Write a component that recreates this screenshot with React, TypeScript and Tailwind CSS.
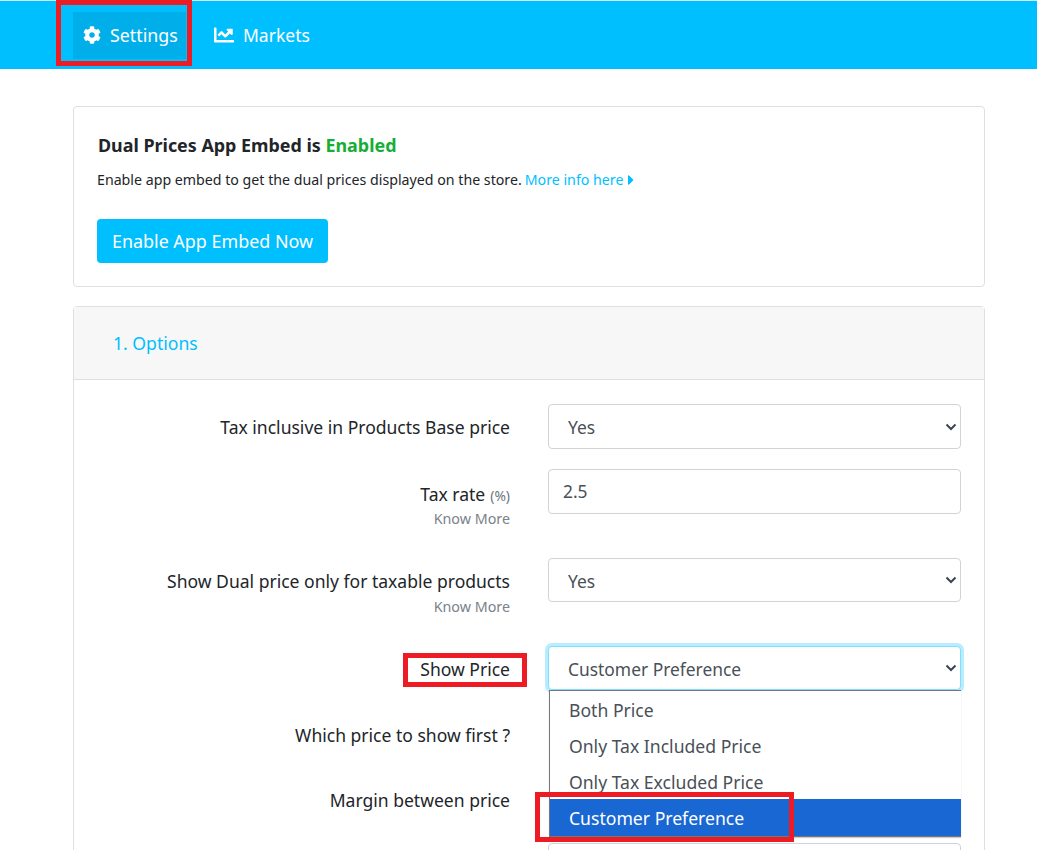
import type { ReactNode } from "react";
import { FaCog, FaChartLine, FaCaretRight } from "react-icons/fa";

const font = "font-['Noto_Sans','Open_Sans',sans-serif]";

function Chevron() {
  return (
    <svg className="pointer-events-none absolute right-[4px] top-1/2 -translate-y-1/2" width="12" height="8" viewBox="0 0 12 8" fill="none">
      <path d="M1.5 1.5 6 6l4.5-4.5" stroke="#3d4550" strokeWidth="2" />
    </svg>
  );
}

function SelectBox({ value, focus = false, h = "h-[45px]" }: { value: string; focus?: boolean; h?: string }) {
  return (
    <div className={`relative w-[413px] ${h}`}>
      <select
        defaultValue={value}
        className={`h-full w-full appearance-none rounded-[4px] bg-white pl-[19px] pr-6 pt-[2px] text-[17.4px] text-[#495057] outline-none border ${
          focus ? "border-[#80dfff] shadow-[0_0_0_3px_rgba(0,191,255,0.28)]" : "border-[#ced4da]"
        }`}
      >
        <option>{value}</option>
      </select>
      <Chevron />
    </div>
  );
}

function Row({
  label,
  extra,
  more,
  children,
  className = "",
  labelPad = "pt-[11px]",
  moreGap = "mt-[2px]",
}: {
  label: string;
  extra?: string;
  more?: boolean;
  children?: ReactNode;
  className?: string;
  labelPad?: string;
  moreGap?: string;
}) {
  return (
    <div className={`flex items-start ${className}`}>
      <div className={`w-[436px] text-right text-[17.55px] leading-[24px] text-[#212529] ${labelPad}`}>
        <div>
          {label}
          {extra && <span className="ml-[5px] text-[13.8px] text-[#6c757d]">{extra}</span>}
        </div>
        {more && <div className={`${moreGap} text-[14.3px] leading-[20px] text-[#7a828a]`}>Know More</div>}
      </div>
      <div className="ml-[38px]">{children}</div>
    </div>
  );
}

export default function App() {
  return (
    <div className={`relative h-[850px] overflow-hidden bg-white ${font}`}>
      <nav className="flex h-[69px] items-center border-t border-[#cfeefa] bg-[#00bfff] pl-[73px]">
        <a className="flex h-[47px] w-[113px] items-center gap-[9px] bg-[#00afea] pl-[10px] text-[17.8px] text-white">
          <FaCog className="text-[18px]" />
          Settings
        </a>
        <a className="ml-[15px] flex items-center gap-[9px] pl-[13px] text-[17.5px] text-white">
          <FaChartLine className="text-[20px]" />
          Markets
        </a>
      </nav>

      <main className="pl-[73px] pr-[52px] pt-[37px]">
        <section className="h-[181px] rounded-[4px] border border-[#dfdfdf] pl-[23px] pt-[24px]">
          <h2 className="ml-[1px] text-[17.9px] font-bold leading-[28px] text-[#212529]">
            Dual Prices App Embed is <span className="text-[#16ae35]">Enabled</span>
          </h2>
          <p className="mt-[10px] flex items-center text-[14.2px] leading-[22px] text-[#212529]">
            Enable app embed to get the dual prices displayed on the store.
            <a className="ml-[3px] flex items-center text-[#00bfff]">
              More info here
              <FaCaretRight className="text-[16px] text-[#00bfff]" />
            </a>
          </p>
          <button className="mt-[28px] h-[44px] w-[231px] rounded-[4px] bg-[#00bfff] text-[17.9px] text-white">
            Enable App Embed Now
          </button>
        </section>

        <section className="mt-[19px] h-[600px] rounded-[4px] border border-[#dfdfdf]">
          <header className="flex h-[73px] items-center border-b border-[#dfdfdf] bg-[#f7f7f7] pl-[39px] text-[17.6px] text-[#00bfff]">
            1. Options
          </header>
          <div className="pt-[24px]">
            <Row label="Tax inclusive in Products Base price" className="h-[65px]">
              <SelectBox value="Yes" />
            </Row>
            <Row label="Tax rate" extra="(%)" more labelPad="pt-[13px]" moreGap="mt-[1px]" className="h-[89px]">
              <input
                defaultValue="2.5"
                className="h-[45px] w-[413px] rounded-[4px] border border-[#ced4da] px-[14px] pb-[2px] text-[17.4px] text-[#495057] outline-none"
              />
            </Row>
            <Row label="Show Dual price only for taxable products" more moreGap="mt-[4px]" className="h-[88px]">
              <SelectBox value="Yes" h="h-[44px]" />
            </Row>
            <Row label="Show Price" className="h-[66px]">
              <SelectBox value="Customer Preference" focus h="h-[44px]" />
            </Row>
            <Row label="Which price to show first ?" className="h-[65px]" />
            <Row label="Margin between price" className="h-[66px]" />
            <div className="ml-[474px] h-[45px] w-[413px] rounded-[4px] border border-[#ced4da]" />
          </div>
        </section>
      </main>

      {/* open dropdown list */}
      <ul className="absolute left-[549px] top-[690px] w-[412px] border-y border-l border-[#767676] bg-white text-[17.6px] text-[#495057] shadow-[0_1px_1px_rgba(0,0,0,0.2)]">
        <li className="flex h-[36px] items-center pl-[19px] pt-[2px]">Both Price</li>
        <li className="flex h-[36px] items-center pl-[19px] pt-[2px]">Only Tax Included Price</li>
        <li className="flex h-[36px] items-center pl-[19px] pt-[2px]">Only Tax Excluded Price</li>
        <li className="flex h-[37px] items-center bg-[#1967d2] pl-[19px] pt-[2px] text-white">Customer Preference</li>
      </ul>

      {/* red annotation boxes */}
      <div className="absolute left-[56px] top-0 h-[66px] w-[136px] border-[5px] border-[#ed1c24]" />
      <div className="absolute left-[403px] top-[653px] h-[34px] w-[124px] border-[5px] border-[#ed1c24]" />
      <div className="absolute left-[535px] top-[792px] h-[50px] w-[259px] border-[5px] border-[#ed1c24]" />
    </div>
  );
}
